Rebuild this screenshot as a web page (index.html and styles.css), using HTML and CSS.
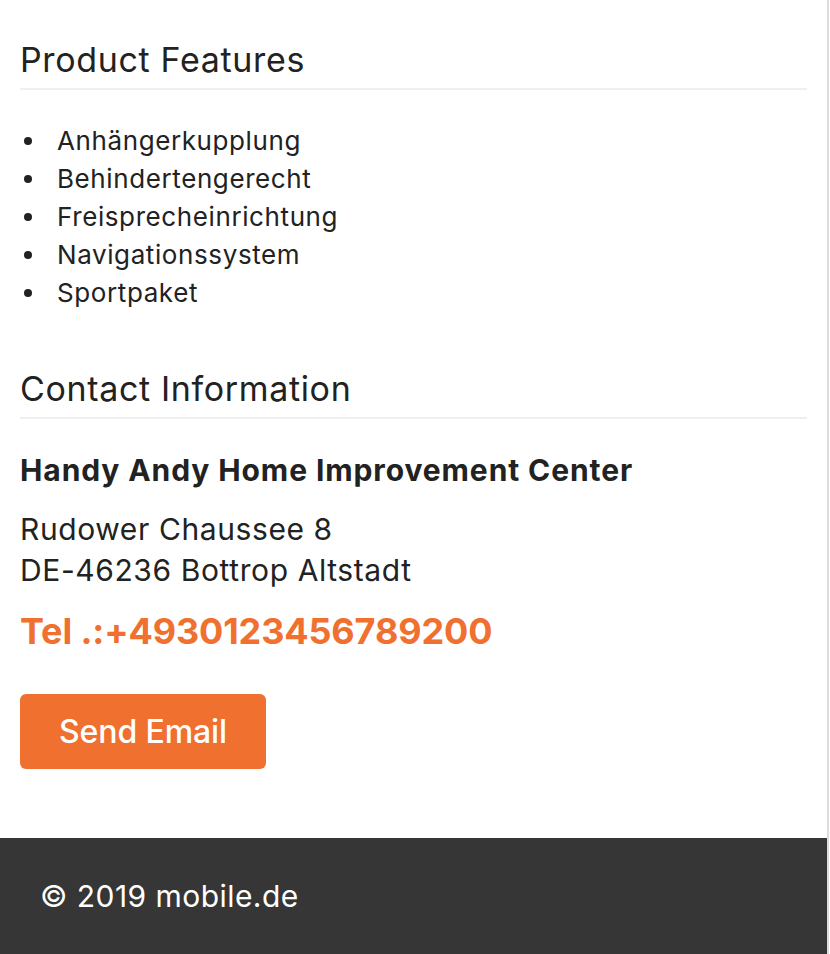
FILE: index.html
```html
<!DOCTYPE html>
<html lang="de">
<head>
<meta charset="utf-8">
<title>Dealer details</title>
<link rel="stylesheet" href="styles.css">
</head>
<body>
<div class="page">
  <main class="content">
    <section class="features">
      <h2 class="section-title">Product Features</h2>
      <ul class="feature-list">
        <li>Anhängerkupplung</li>
        <li>Behindertengerecht</li>
        <li>Freisprecheinrichtung</li>
        <li>Navigationssystem</li>
        <li>Sportpaket</li>
      </ul>
    </section>
    <section class="contact">
      <h2 class="section-title">Contact Information</h2>
      <h3 class="dealer-name">Handy Andy Home Improvement Center</h3>
      <p class="address">Rudower Chaussee 8<br>DE-46236 Bottrop Altstadt</p>
      <p class="phone">Tel .:+4930123456789200</p>
      <a class="btn" href="#">Send Email</a>
    </section>
  </main>
  <footer class="footer">© 2019 mobile.de</footer>
</div>
</body>
</html>
```

FILE: styles.css
```css
html, body {
  margin: 0;
  padding: 0;
  background: #fff;
}
body {
  font-family: Inter, "Noto Sans", sans-serif;
  color: #222;
  overflow: hidden;
}
.page {
  width: 827px;
  border-right: 2px solid #dcdcdc;
  min-height: 954px;
  display: flex;
  flex-direction: column;
}
.content {
  padding: 40px 20px 69px;
}
.section-title {
  margin: 0;
  font-size: 34px;
  font-weight: 400;
  line-height: 40px;
  padding-bottom: 8px;
  border-bottom: 2px solid #efefef;
  letter-spacing: 0.65px;
}
.feature-list {
  list-style: none;
  margin: 32px 0 57px;
  padding-left: 4px;
  font-size: 26px;
  line-height: 38px;
  letter-spacing: 0.6px;
}
.feature-list li {
  display: flex;
  align-items: center;
}
.feature-list li::before {
  content: "";
  flex: none;
  width: 8px;
  height: 8px;
  border-radius: 50%;
  background: #222;
  margin-right: 25px;
}
.dealer-name {
  margin: 31px 0 0;
  font-size: 30px;
  line-height: 40px;
  font-weight: 700;
  letter-spacing: 0.9px;
}
.address {
  margin: 19px 0 0;
  font-size: 30px;
  line-height: 41px;
  letter-spacing: 0.6px;
}
.phone {
  margin: 20px 0 0;
  font-size: 36px;
  line-height: 40px;
  font-weight: 700;
  letter-spacing: -0.13px;
  color: #f07030;
}
.btn {
  display: inline-flex;
  align-items: center;
  justify-content: center;
  margin-top: 43px;
  width: 246px;
  height: 75px;
  background: #f07030;
  color: #fff;
  font-size: 32px;
  font-weight: 500;
  letter-spacing: -0.1px;
  text-decoration: none;
  border-radius: 6px;
}
.footer {
  background: #363636;
  color: #fff;
  font-size: 30px;
  height: 116px;
  display: flex;
  align-items: center;
  padding-left: 40px;
  letter-spacing: 0.45px;
}
```
